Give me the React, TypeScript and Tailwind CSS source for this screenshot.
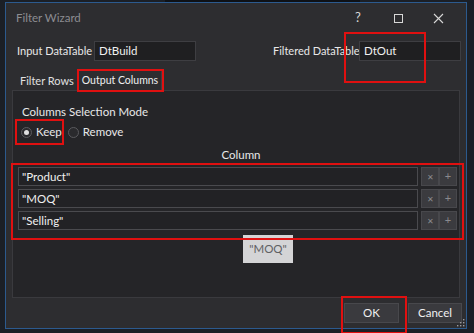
import React from "react";

const ROWS = ['"Product"', '"MOQ"', '"Selling"'];

function Field({ label, value, labelW }: { label: string; value: string; labelW: string }) {
  return (
    <div className="flex items-center gap-[4px]">
      <span className={`${labelW} text-[11px] text-[#e8e8e8] whitespace-nowrap`}>{label}</span>
      <div className="w-[102px] h-[20px] bg-[#1f1f21] border border-[#3e3e42] flex items-center px-[4px] text-[11.5px] text-[#f0f0f0]">
        {value}
      </div>
    </div>
  );
}

function Radio({ checked, label }: { checked?: boolean; label: string }) {
  return (
    <div className="flex items-center gap-[4px]">
      <span className="w-[11px] h-[11px] rounded-full border border-[#5a5a5e] bg-[#2a2a2d] flex items-center justify-center">
        {checked && <span className="w-[5px] h-[5px] rounded-full bg-[#e0e0e0]" />}
      </span>
      <span className="text-[11.5px] text-[#e8e8e8]">{label}</span>
    </div>
  );
}

function RowBtn({ children, size }: { children: React.ReactNode; size: string }) {
  return (
    <div className={`w-[18px] h-[19px] bg-[#3b3b3f] border border-[#48484c] flex items-center justify-center ${size} text-[#8a8a8e]`}>
      {children}
    </div>
  );
}

export default function App() {
  return (
    <div className="w-[474px] h-[333px] bg-[#1b1f26] overflow-hidden relative" style={{ fontFamily: 'Lato, "Noto Sans", sans-serif' }}>
      <div className="absolute left-[165px] top-0 w-[195px] h-[2px] bg-[#0e1116]" />
      <div className="ml-[5px] mt-[2px] w-[462px] h-[327px] border border-[#2c5a8e] bg-[#2d2d30] flex flex-col">
        {/* title bar */}
        <div className="h-[30px] flex items-center pl-[10px] pr-[8px] shrink-0">
          <span className="text-[11.5px] text-[#8c8c90]">Filter Wizard</span>
          <div className="ml-auto flex items-center text-[#d8d8d8]">
            <span className="w-[40px] text-center text-[13px]">?</span>
            <span className="w-[40px] flex justify-center">
              <span className="w-[9px] h-[9px] border border-[#d8d8d8]" />
            </span>
            <span className="w-[40px] flex justify-center">
              <svg width="11" height="11" viewBox="0 0 11 11"><path d="M1 1L10 10M10 1L1 10" stroke="#d8d8d8" strokeWidth="1.1" /></svg>
            </span>
          </div>
        </div>

        {/* data table fields */}
        <div className="flex items-center justify-between pl-[11px] pr-[5px] mt-[8px] shrink-0">
          <Field label="Input DataTable" value="DtBuild" labelW="w-[73px]" />
          <Field label="Filtered DataTable" value="DtOut" labelW="w-[82px]" />
        </div>

        {/* tabs */}
        <div className="flex items-end pl-[8px] mt-[9px] h-[21px] shrink-0">
          <div className="px-[6px] h-[19px] flex items-center text-[11px] text-[#e0e0e0]">Filter Rows</div>
          <div className="ml-[-2px] px-[3px] h-[21px] flex items-center text-[10.5px] text-[#f0f0f0] bg-[#2d2d30] border-x border-t border-[#3f3f44]">Output Columns</div>
        </div>

        {/* tab panel */}
        <div className="mx-[6px] h-[208px] border border-[#3a3a3e] bg-[#252528] flex flex-col shrink-0 -mt-px">
          <div className="pl-[9px] pt-[13px] h-[29px] leading-[16px] text-[11.5px] text-[#e8e8e8]">Columns Selection Mode</div>
          <div className="flex items-center gap-[6px] pl-[8px] mt-[4px] h-[16px]">
            <Radio checked label="Keep" />
            <Radio label="Remove" />
          </div>
          <div className="text-center h-[16px] leading-[16px] text-[11.5px] text-[#e8e8e8] mt-[7px] pl-[10px]">Column</div>
          <div className="flex flex-col gap-[3px] pl-[5px] pr-[2px] mt-[4px]">
            {ROWS.map((r) => (
              <div key={r} className="flex items-center gap-[3px]">
                <div className="w-[400px] h-[19px] bg-[#222225] border border-[#4a4a4e] flex items-center px-[3px] text-[11.5px] text-[#f0f0f0]">
                  {r}
                </div>
                <div className="flex">
                  <RowBtn size="text-[8px]">✕</RowBtn>
                  <RowBtn size="text-[11px]">+</RowBtn>
                </div>
              </div>
            ))}
          </div>
          <div className="ml-[230px] mt-[5px] w-[50px] h-[28px] bg-[#d4d4d6] flex items-center justify-center text-[11.5px] text-[#606064]">
            "MOQ"
          </div>
        </div>

        {/* footer */}
        <div className="flex-1 flex items-center justify-end gap-[9px] pr-[4px] relative">
          <div className="w-[55px] h-[20px] bg-[#3a3a3e] border border-[#48484c] flex items-center justify-center text-[11.5px] text-[#f0f0f0]">OK</div>
          <div className="w-[54px] h-[20px] bg-[#3a3a3e] border border-[#48484c] flex items-center justify-center text-[11.5px] text-[#f0f0f0]">Cancel</div>
          <svg className="absolute right-[1px] bottom-[1px]" width="8" height="8" viewBox="0 0 8 8">
            <g fill="#9a9a9e"><rect x="6" y="0" width="1.4" height="1.4" /><rect x="3" y="3" width="1.4" height="1.4" /><rect x="6" y="3" width="1.4" height="1.4" /><rect x="0" y="6" width="1.4" height="1.4" /><rect x="3" y="6" width="1.4" height="1.4" /><rect x="6" y="6" width="1.4" height="1.4" /></g>
          </svg>
        </div>
      </div>

      {/* red annotation boxes */}
      <div className="absolute left-[344px] top-[32px] w-[82px] h-[51px] border-2 border-[#e01010]" />
      <div className="absolute left-[77px] top-[69px] w-[87px] h-[23px] border-2 border-[#e01010]" />
      <div className="absolute left-[15px] top-[119px] w-[49px] h-[26px] border-2 border-[#e01010]" />
      <div className="absolute left-[11px] top-[163px] w-[453px] h-[77px] border-2 border-[#e01010]" />
      <div className="absolute left-[341px] top-[296px] w-[66px] h-[38px] border-2 border-[#e01010]" />
    </div>
  );
}
